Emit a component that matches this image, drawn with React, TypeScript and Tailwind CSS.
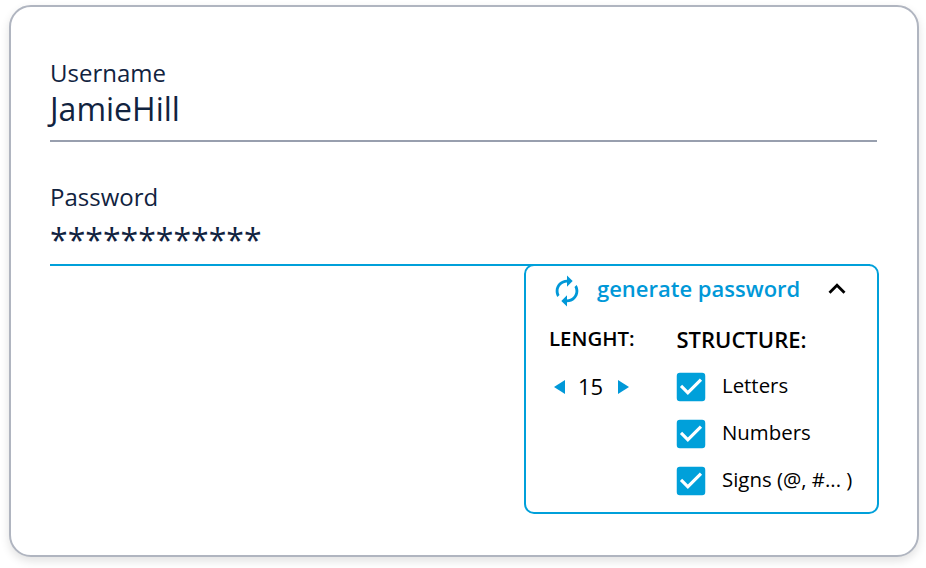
import { MdAutorenew, MdCheckBox, MdExpandLess } from "react-icons/md";

function Option({ label }: { label: string }) {
  return (
    <label className="flex h-[47px] items-center">
      <MdCheckBox className="size-[38px] shrink-0 text-[#00a0da]" />
      <span className="-mt-[3px] ml-[12.5px] whitespace-pre text-[20.4px] leading-[28px]">{label}</span>
    </label>
  );
}

export default function App() {
  return (
    <div className="h-[568px] w-[926px] overflow-hidden bg-white pl-[9px] pt-[5px] font-['Open_Sans',sans-serif] text-[#11233f]">
      <div className="h-[552px] w-[910px] rounded-[22px] border-2 border-[#b0b5c0] bg-white pl-[39px] shadow-[0_4px_10px_rgba(0,0,0,0.12)]">
        <div className="flex h-[135px] w-[827px] flex-col border-b-2 border-[#989fae] pt-[49px]">
          <span className="text-[24px] leading-[34px]">Username</span>
          <span className="text-[32px] leading-[38px]">JamieHill</span>
        </div>
        <div className="flex h-[124px] w-[820px] flex-col border-b-2 border-[#00a0da] pt-[38px]">
          <span className="text-[24px] leading-[34px]">Password</span>
          <span className="pt-[5px] text-[32px] leading-[42px]">************</span>
        </div>
        <section className="-mt-[2px] ml-[474px] h-[250px] w-[355px] rounded-[10px] border-2 border-[#00a0da] bg-white text-black">
          <header className="flex h-[50px] items-center pl-[24px] text-[#0098d8]">
            <MdAutorenew className="-ml-[0.5px] -mt-px size-[34px]" />
            <span className="-mt-[7px] ml-[13.5px] w-[206px] whitespace-nowrap text-[22px] font-semibold leading-[30px]">generate password</span>
            <MdExpandLess className="-mt-[4px] ml-[16.5px] size-[34px] text-black" />
          </header>
          <div className="flex">
            <div className="w-[122px] pl-[24px]">
              <h3 className="-ml-px h-[46px] whitespace-nowrap pt-[8px] text-[20.4px] font-semibold leading-[28px]">LENGHT:</h3>
              <div className="flex h-[50px] items-center pl-[4px]">
                <svg viewBox="0 0 11 14" className="h-[14px] w-[11px] fill-[#0098d8]"><path d="M11 0v14L0 7z" /></svg>
                <span className="-mt-[2px] w-[53px] pr-[2px] text-center text-[22px] leading-[30px]">15</span>
                <svg viewBox="0 0 11 14" className="h-[14px] w-[11px] fill-[#0098d8]"><path d="M0 0v14l11-7z" /></svg>
              </div>
            </div>
            <div className="pl-[23.5px]">
              <h3 className="h-[47px] whitespace-nowrap pl-[5px] pt-[9px] text-[22px] font-semibold leading-[28px]">STRUCTURE:</h3>
              <Option label="Letters" />
              <Option label="Numbers" />
              <Option label="Signs (@, #... )" />
            </div>
          </div>
        </section>
      </div>
    </div>
  );
}
